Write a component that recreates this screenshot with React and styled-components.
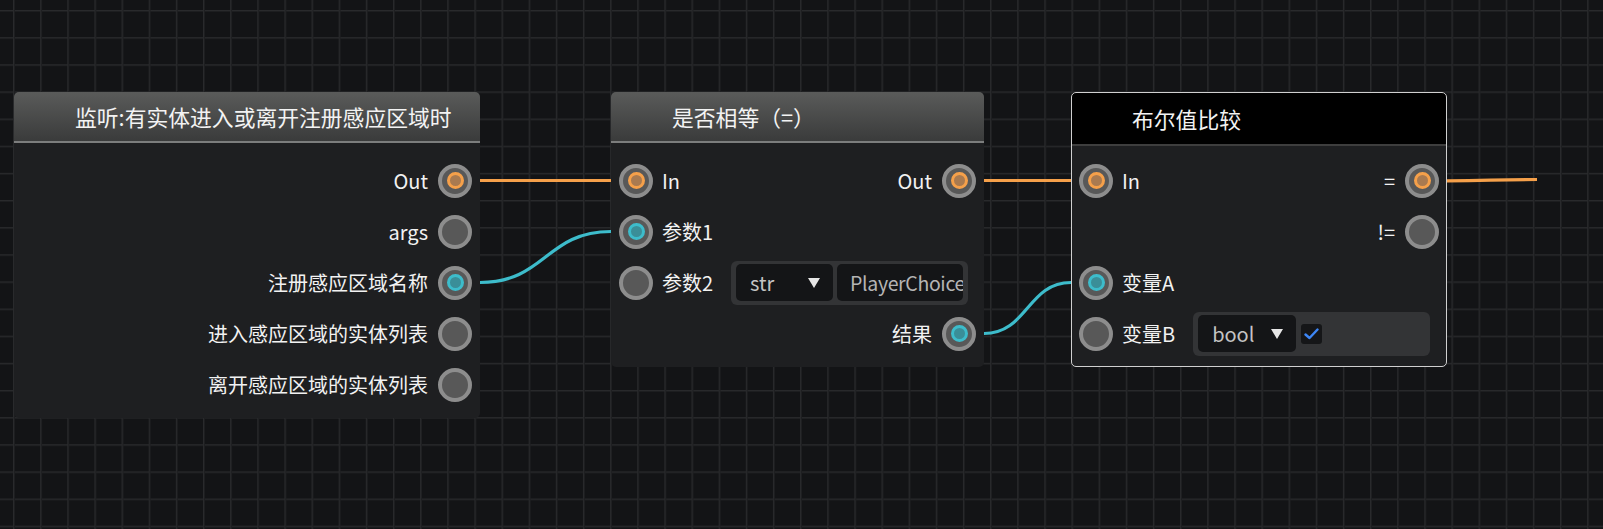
import React from "react";
import styled, { createGlobalStyle } from "styled-components";

const GlobalStyle = createGlobalStyle`
  html, body {
    margin: 0;
    padding: 0;
    background: #131416;
  }
  body {
    font-family: "Noto Sans CJK SC", "Noto Sans", sans-serif;
  }
`;

const GRID = 27.15;

const COLORS = {
  exec: { ring: "#f5a04a", fill: "#a97a50" },
  data: { ring: "#3dbccb", fill: "#3a8e98" },
};

const Canvas = styled.div`
  position: relative;
  width: 1603px;
  height: 529px;
  overflow: hidden;
  background-color: #131416;
  background-image: linear-gradient(
      to right,
      #292a2c 0 1px,
      #1e1f21 1px 2px,
      transparent 2px
    ),
    linear-gradient(to bottom, #292a2c 0 1px, #1e1f21 1px 2px, transparent 2px);
  background-size: ${GRID}px ${GRID}px;
  background-position: 13px 10px;
`;

const Wires = styled.svg`
  position: absolute;
  left: 0;
  top: 0;
  z-index: 0;
`;

const Node = styled.div`
  position: absolute;
  z-index: 1;
  left: ${(p) => p.$x}px;
  top: ${(p) => p.$y}px;
  width: ${(p) => p.$w}px;
  box-sizing: border-box;
  background: #1e1f21;
  border-radius: 5px;
  overflow: hidden;
  outline: ${(p) => (p.$selected ? "1.5px solid #d0d0d0" : "none")};
  outline-offset: -1.5px;
`;

const Header = styled.div`
  height: ${(p) => (p.$selected ? 52 : 49)}px;
  display: flex;
  align-items: center;
  padding-left: 61px;
  background: ${(p) =>
    p.$selected ? "#000" : "linear-gradient(#5a5b5a, #3a3b3b)"};
  border-bottom: 2px solid ${(p) => (p.$selected ? "#3e3e3e" : "#7c7d7d")};
`;

const Title = styled.span`
  font-size: 21.8px;
  color: #f3f3f3;
  white-space: nowrap;
`;

const Body = styled.div`
  display: flex;
  flex-direction: column;
  padding: ${(p) => (p.$selected ? 9 : 12)}px 0 8px;
`;

const Row = styled.div`
  height: 51px;
  display: flex;
  align-items: center;
  justify-content: ${(p) => (p.$end ? "flex-end" : "space-between")};
  padding: 0 8px;
`;

const Side = styled.div`
  display: flex;
  align-items: center;
  gap: ${(p) => (p.$right ? 10 : 9)}px;
`;

const Label = styled.span`
  font-size: 20px;
  color: #f2f2f2;
  white-space: nowrap;
`;

const Socket = styled.span`
  flex: none;
  width: 34px;
  height: 34px;
  box-sizing: border-box;
  border-radius: 50%;
  border: 4px solid #8d8d8d;
  background: #585858;
  display: flex;
  align-items: center;
  justify-content: center;
`;

const Dot = styled.span`
  width: 17px;
  height: 17px;
  box-sizing: border-box;
  border-radius: 50%;
  border: 3px solid ${(p) => COLORS[p.$kind].ring};
  background: ${(p) => COLORS[p.$kind].fill};
`;

const Widget = styled.div`
  width: 237px;
  height: 44px;
  box-sizing: border-box;
  margin-left: 9px;
  padding: 0 5px;
  display: flex;
  align-items: center;
  gap: 4px;
  background: #333436;
  border-radius: 6px;
`;

const Select = styled.div`
  flex: none;
  width: ${(p) => p.$w}px;
  height: 36.5px;
  box-sizing: border-box;
  padding: 0 13px 0 14px;
  display: flex;
  align-items: center;
  justify-content: space-between;
  background: #141517;
  border-radius: 5px;
  font-size: 20px;
  color: #c4c4c4;
`;

const Caret = styled.span`
  width: 0;
  height: 0;
  border-left: 6.5px solid transparent;
  border-right: 6.5px solid transparent;
  border-top: 10px solid #e6e6e6;
`;

const TextInput = styled.div`
  flex: 1;
  min-width: 0;
  height: 36.5px;
  box-sizing: border-box;
  padding-left: 13px;
  display: flex;
  align-items: center;
  overflow: hidden;
  background: #141517;
  border-radius: 5px;
  font-size: 19.5px;
  letter-spacing: -0.35px;
  color: #b4b4b4;
  white-space: nowrap;
`;

const Check = styled.span`
  flex: none;
  width: 21px;
  height: 20px;
  margin-left: 1px;
  display: flex;
  align-items: center;
  justify-content: center;
  background: #151618;
  border-radius: 3px;
`;

const Port = ({ kind }) => (
  <Socket>{kind && <Dot $kind={kind} />}</Socket>
);

const Out = ({ label, kind }) => (
  <Side $right>
    <Label>{label}</Label>
    <Port kind={kind} />
  </Side>
);

const In = ({ label, kind, children }) => (
  <Side>
    <Port kind={kind} />
    <Label>{label}</Label>
    {children}
  </Side>
);

const curve = (x1, y1, x2, y2) => {
  const d = (x2 - x1) / 2;
  return `M ${x1 - 25} ${y1} L ${x1} ${y1} C ${x1 + d} ${y1} ${x2 - d} ${y2} ${x2} ${y2} L ${x2 + 25} ${y2}`;
};

export default function App() {
  return (
    <>
      <GlobalStyle />
      <Canvas>
        <Wires width="1603" height="529">
          <g fill="none" strokeWidth="3.2">
            <path d="M 455 180.5 L 636 180.5" stroke="#f5a04a" />
            <path d="M 958 180.5 L 1096 180.5" stroke="#f5a04a" />
            <path d="M 1421 180.8 L 1447 180.8 C 1490 180.8 1492 179.5 1537 179.5" stroke="#f5a04a" />
            <path d={curve(480, 282.5, 611, 231.5)} stroke="#3dbccb" />
            <path d={curve(984, 333.5, 1071, 282.5)} stroke="#3dbccb" />
          </g>
        </Wires>

        <Node $x={14} $y={92} $w={466}>
          <Header>
            <Title>监听:有实体进入或离开注册感应区域时</Title>
          </Header>
          <Body>
            <Row $end><Out label="Out" kind="exec" /></Row>
            <Row $end><Out label="args" /></Row>
            <Row $end><Out label="注册感应区域名称" kind="data" /></Row>
            <Row $end><Out label="进入感应区域的实体列表" /></Row>
            <Row $end><Out label="离开感应区域的实体列表" /></Row>
          </Body>
        </Node>

        <Node $x={611} $y={92} $w={373}>
          <Header>
            <Title>是否相等（=）</Title>
          </Header>
          <Body>
            <Row>
              <In label="In" kind="exec" />
              <Out label="Out" kind="exec" />
            </Row>
            <Row><In label="参数1" kind="data" /></Row>
            <Row>
              <In label="参数2">
                <Widget>
                  <Select $w={97}>
                    <span>str</span>
                    <Caret />
                  </Select>
                  <TextInput>PlayerChoice</TextInput>
                </Widget>
              </In>
            </Row>
            <Row $end><Out label="结果" kind="data" /></Row>
          </Body>
        </Node>

        <Node $x={1071} $y={92} $w={376} $selected>
          <Header $selected>
            <Title>布尔值比较</Title>
          </Header>
          <Body $selected>
            <Row>
              <In label="In" kind="exec" />
              <Out label="=" kind="exec" />
            </Row>
            <Row $end><Out label="!=" /></Row>
            <Row><In label="变量A" kind="data" /></Row>
            <Row>
              <In label="变量B">
                <Widget>
                  <Select $w={98}>
                    <span>bool</span>
                    <Caret />
                  </Select>
                  <Check>
                    <svg width="15" height="12" viewBox="0 0 15 12">
                      <path d="M1.5 6.5 L5.5 10 L13.5 1.5" fill="none" stroke="#3d86f5" strokeWidth="2.4" strokeLinecap="round" strokeLinejoin="round" />
                    </svg>
                  </Check>
                </Widget>
              </In>
            </Row>
          </Body>
        </Node>
      </Canvas>
    </>
  );
}
